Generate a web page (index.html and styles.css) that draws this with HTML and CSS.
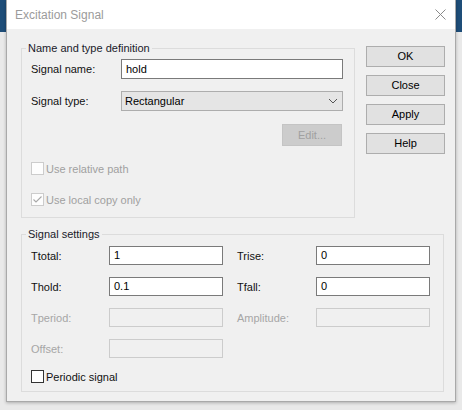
FILE: index.html
```html
<!DOCTYPE html>
<html>
<head>
<meta charset="utf-8">
<link rel="stylesheet" href="styles.css">
</head>
<body>
<div class="screen">
  <div class="dialog">
    <div class="titlebar">
      <span class="title">Excitation Signal</span>
      <svg class="close" width="11" height="11" viewBox="0 0 11 11"><path d="M0.5 0.5 L10.5 10.5 M10.5 0.5 L0.5 10.5" stroke="#8a8a8a" stroke-width="1" fill="none"/></svg>
    </div>
    <div class="body">
      <div class="top">
        <fieldset class="group g1">
          <legend>Name and type definition</legend>
          <div class="frow"><span class="lbl">Signal name:</span><div class="input wide">hold</div></div>
          <div class="frow r2"><span class="lbl">Signal type:</span><div class="select"><span>Rectangular</span><svg width="10" height="6" viewBox="0 0 10 6"><path d="M1 1 L5 5 L9 1" stroke="#555" stroke-width="1" fill="none"/></svg></div></div>
          <div class="editrow"><div class="btn edit">Edit...</div></div>
          <div class="check c1 disabled"><span class="box"></span><span>Use relative path</span></div>
          <div class="check c2 disabled"><span class="box"><svg width="11" height="11" viewBox="0 0 11 11"><path d="M1.5 5.5 L4 8 L9.5 2.5" stroke="#a8a8a8" stroke-width="1.1" fill="none"/></svg></span><span>Use local copy only</span></div>
        </fieldset>
        <div class="buttons">
          <div class="btn">OK</div>
          <div class="btn">Close</div>
          <div class="btn">Apply</div>
          <div class="btn">Help</div>
        </div>
      </div>
      <fieldset class="group g2">
        <legend>Signal settings</legend>
        <div class="grid">
          <span class="lbl">Ttotal:</span><div class="input">1</div>
          <span class="lbl rl">Trise:</span><div class="input">0</div>
          <span class="lbl">Thold:</span><div class="input">0.1</div>
          <span class="lbl rl">Tfall:</span><div class="input">0</div>
          <span class="lbl dis">Tperiod:</span><div class="input off"></div>
          <span class="lbl rl dis">Amplitude:</span><div class="input off"></div>
          <span class="lbl dis">Offset:</span><div class="input off"></div>
        </div>
        <div class="check c3"><span class="box"></span><span>Periodic signal</span></div>
      </fieldset>
    </div>
  </div>
</div>
</body>
</html>
```

FILE: styles.css
```css
html, body {
  margin: 0;
  padding: 0;
}
body {
  font-family: "Liberation Sans", Arial, sans-serif;
  font-size: 11px;
  color: #111;
}
.screen {
  width: 462px;
  height: 410px;
  overflow: hidden;
  background:
    linear-gradient(#1e4d78 0, #1e4d78 32px, #e9e9e9 32px, #e9e9e9 100%);
}
.dialog {
  margin-left: 6px;
  width: 450px;
  height: 402px;
  box-sizing: border-box;
  border: 1px solid #a9a9a9;
  border-top: none;
  background: #f0f0f0;
  box-shadow: 0 1px 3px rgba(0,0,0,0.25);
  display: flex;
  flex-direction: column;
}
.titlebar {
  height: 29px;
  background: #ffffff;
  display: flex;
  align-items: center;
  justify-content: space-between;
  padding: 0 8px 0 8px;
  flex: none;
}
.title {
  font-size: 12px;
  color: #9b9b9b;
  line-height: 14px;
}
.close {
  display: block;
  margin-right: 1px;
}
.body {
  padding: 12px 10px 0 14px;
}
.top {
  display: flex;
  gap: 11px;
  align-items: flex-start;
}
.group {
  margin: 0;
  border: 1px solid #dcdcdc;
  box-sizing: border-box;
  min-inline-size: 0;
}
.group legend {
  padding: 0 2px;
  margin-left: -5px;
  line-height: 14px;
  color: #1a1a2a;
}
.g1 {
  width: 334px;
  padding: 4px 11px 11px 9px;
}
.frow {
  display: flex;
  align-items: center;
  height: 20px;
}
.frow.r2 {
  margin-top: 12px;
}
.frow .lbl {
  width: 90px;
  flex: none;
}
.input {
  box-sizing: border-box;
  height: 19px;
  background: #fff;
  border: 1px solid #7a7a7a;
  padding: 0 4px;
  line-height: 17px;
  color: #000;
}
.input.wide {
  width: 223px;
  height: 20px;
  line-height: 18px;
}
.input.off {
  background: #f0f0f0;
  border-color: #cccccc;
}
.select {
  box-sizing: border-box;
  width: 223px;
  height: 20px;
  background: #e5e5e5;
  border: 1px solid #adadad;
  display: flex;
  align-items: center;
  justify-content: space-between;
  padding: 0 4px 0 3px;
  color: #000;
}
.select svg {
  display: block;
}
.editrow {
  display: flex;
  justify-content: flex-end;
  margin-top: 13px;
  padding-right: 1px;
}
.btn {
  box-sizing: border-box;
  height: 21px;
  background: #e1e1e1;
  border: 1px solid #adadad;
  text-align: center;
  line-height: 19px;
  color: #000;
}
.btn.edit {
  width: 60px;
  height: 22px;
  line-height: 20px;
  background: #cccccc;
  border-color: #c4c4c4;
  color: #a0a0a0;
}
.buttons {
  width: 79px;
  margin-top: 5px;
  display: flex;
  flex-direction: column;
  gap: 8px;
}
.check {
  display: flex;
  align-items: center;
  height: 13px;
  gap: 2px;
}
.check .box {
  box-sizing: border-box;
  width: 13px;
  height: 13px;
  border: 1px solid #333;
  background: #fff;
  display: flex;
  align-items: center;
  justify-content: center;
  flex: none;
}
.check.disabled {
  color: #a0a0a0;
}
.check.disabled .box {
  border-color: #cccccc;
  background: #fdfdfd;
}
.check.c1 {
  margin-top: 16px;
}
.check.c2 {
  margin-top: 18px;
}
.g2 {
  width: 423px;
  margin-top: 9px;
  padding: 5px 13px 8px 9px;
}
.grid {
  display: grid;
  grid-template-columns: 78px 114px 93px 114px;
  grid-auto-rows: 19px;
  row-gap: 12px;
  align-items: center;
}
.grid .lbl {
  padding-left: 0;
}
.grid .rl {
  padding-left: 14px;
}
.lbl.dis {
  color: #a6a6a6;
}
.check.c3 {
  margin-top: 12px;
}
```
